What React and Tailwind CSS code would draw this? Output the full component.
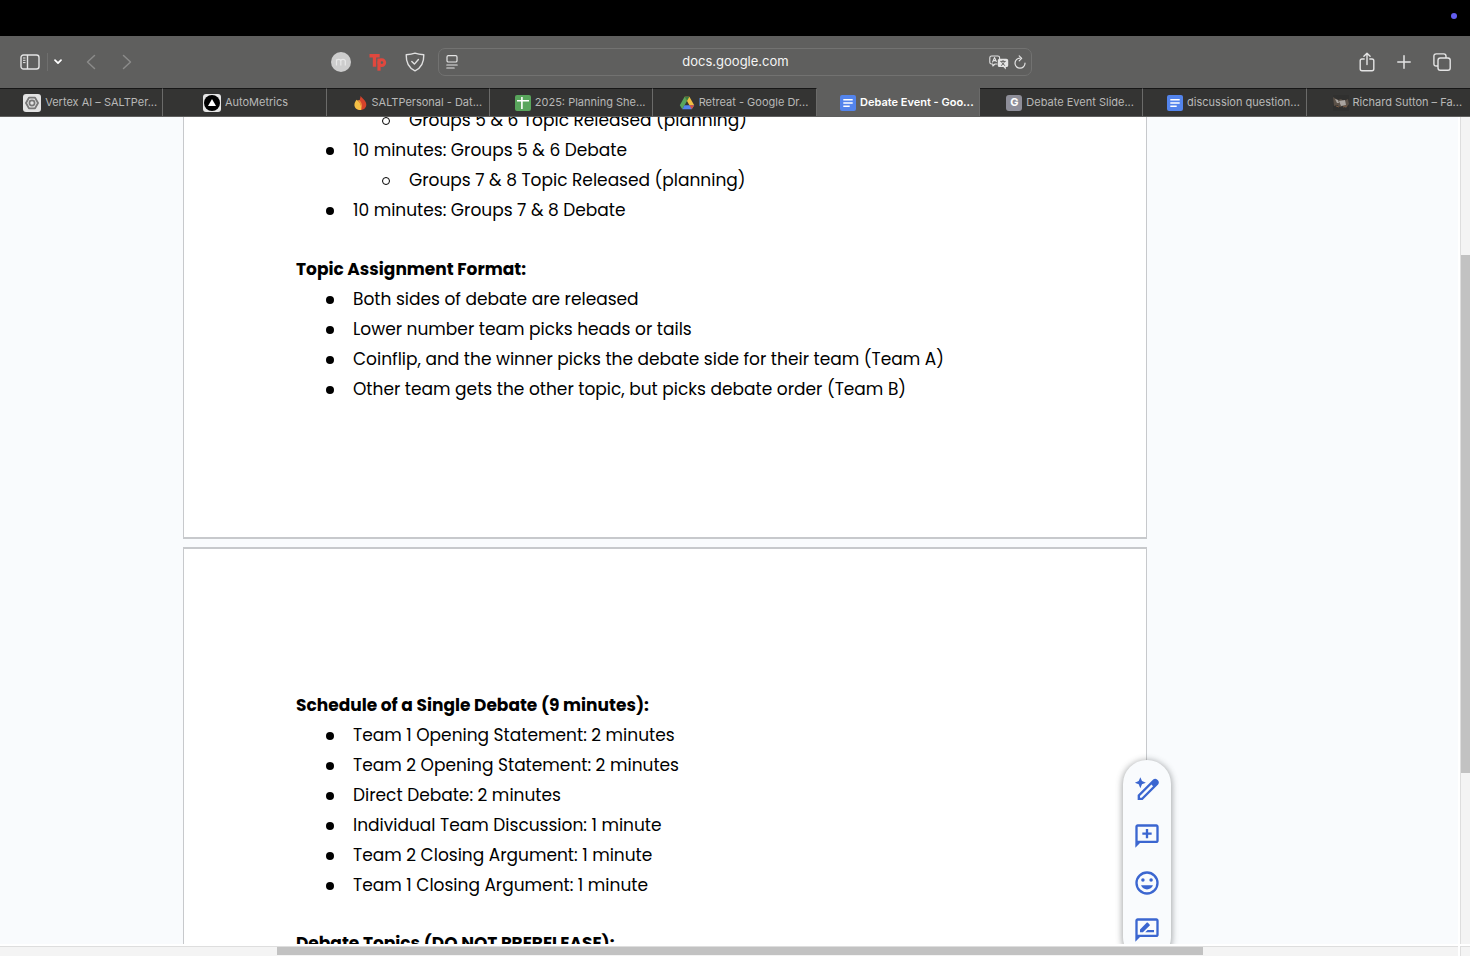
const Chrome = {
  Sidebar: () => (
    <svg viewBox="0 0 20 16" className="h-4 w-5" fill="none" stroke="#e4e4e4" strokeWidth="1.4">
      <rect x="1" y="1" width="18" height="14" rx="2.5" />
      <path d="M7.5 1v14" />
      <path d="M3 4h2.5M3 6.3h2.5M3 8.6h2.5" strokeWidth="1" />
    </svg>
  ),
  Chevron: () => (
    <svg viewBox="0 0 8 6" className="h-[6px] w-2" fill="none" stroke="#fff" strokeWidth="1.7" strokeLinecap="round" strokeLinejoin="round">
      <path d="M1 1.2l3 3 3-3" />
    </svg>
  ),
  Back: () => (
    <svg viewBox="0 0 10 16" className="h-4 w-[10px]" fill="none" stroke="#8b8b8a" strokeWidth="1.5" strokeLinecap="round" strokeLinejoin="round">
      <path d="M8.5 1.5L1.5 8l7 6.5" />
    </svg>
  ),
  Forward: () => (
    <svg viewBox="0 0 10 16" className="h-4 w-[10px]" fill="none" stroke="#8b8b8a" strokeWidth="1.5" strokeLinecap="round" strokeLinejoin="round">
      <path d="M1.5 1.5l7 6.5-7 6.5" />
    </svg>
  ),
  Momentum: () => (
    <svg viewBox="0 0 20 20" className="size-5">
      <circle cx="10" cy="10" r="10" fill="#cdcdcd" />
      <path d="M5.500 13.500V7.200M5.500 9.200c0-1.200.8-1.900 2.100-1.900s2.200.7 2.200 2v4.200M9.800 9.300c0-1.300.9-2 2.200-2s2.300.7 2.300 2v4.200" fill="none" stroke="#e8e8e8" strokeWidth="1.2" />
    </svg>
  ),
  Tp: () => (
    <svg viewBox="0 0 18 18" className="size-[18px]" fill="none" stroke="#e0483e" strokeWidth="3.4">
      <path d="M0.500 2.700h10.200M5.500 1.500v12.200" />
      <path d="M10 5.500v12.200" strokeWidth="3.2" />
      <circle cx="12.8" cy="9.6" r="2.9" strokeWidth="2.9" />
    </svg>
  ),
  Shield: () => (
    <svg viewBox="0 0 20 20" className="size-5" fill="none" stroke="#e0e0e0" strokeWidth="1.4" strokeLinejoin="round" strokeLinecap="round">
      <path d="M10 1.200C7.300 2.200 4.200 2.600 1.200 2.800 1 10.500 3.600 16 10 18.800c6.400-2.800 9-8.300 8.800-16C15.800 2.600 12.700 2.200 10 1.200z" />
      <path d="M6.800 9.500l2.600 2.600 4-4.600" />
    </svg>
  ),
  Reader: () => (
    <svg viewBox="0 0 12 14" className="h-[14px] w-3" fill="none" stroke="#e4e4e4" strokeWidth="1.2" strokeLinecap="round">
      <rect x="1" y="0.7" width="10" height="6.3" rx="1.3" />
      <path d="M0.800 10h10.400M0.800 13h7.400" />
    </svg>
  ),
  Translate: () => (
    <svg viewBox="0 0 20 15" className="h-[15px] w-5" fill="none" stroke="#e4e4e4" strokeWidth="1.1" strokeLinejoin="round" strokeLinecap="round">
      <path d="M8 9H6l-2.200 2V9H2.600C1.500 9 .8 8.300.8 7.200V2.800C.8 1.700 1.500 1 2.600 1h6.200c1.100 0 1.800.7 1.800 1.800v.6" />
      <path d="M3.600 7l1.900-4.400L7.300 6.500M4.200 5.600h2.500" />
      <path d="M10.800 3.800h6.400c1.200 0 2 .7 2 1.900v4.500c0 1.200-.8 1.900-2 1.900h-.4v2.500l-2.400-2.500h-3.600c-1.200 0-2-.7-2-1.900V5.700c0-1.200.8-1.900 2-1.900z" fill="#e4e4e4" stroke="none" />
      <path d="M11.600 6.400h4.800M14 5.400v1M12.300 10.400c1.600-.8 2.700-2 3.100-3.900M12.600 6.900c.5 1.500 1.600 2.700 3.200 3.500" stroke="#5f5f5e" strokeWidth="0.9" />
    </svg>
  ),
  Reload: () => (
    <svg viewBox="0 0 12 14" className="h-[14px] w-3" fill="none" stroke="#e4e4e4" strokeWidth="1.2" strokeLinecap="round" strokeLinejoin="round">
      <path d="M6 3.200A5 5 0 1 0 11 8.200" />
      <path d="M5.200.8l2.500 2.500-2.500 2.500" />
    </svg>
  ),
  Share: () => (
    <svg viewBox="0 0 16 20" className="h-5 w-4" fill="none" stroke="#e4e4e4" strokeWidth="1.4" strokeLinecap="round" strokeLinejoin="round">
      <path d="M5.200 7H3C1.800 7 1.200 7.700 1.200 8.800v8c0 1.200.6 1.900 1.800 1.900h10c1.200 0 1.800-.7 1.800-1.900v-8C14.800 7.700 14.200 7 13 7h-2.200" />
      <path d="M8 12.500V1.500M4.900 4.300L8 1.200l3.100 3.100" />
    </svg>
  ),
  Plus: () => (
    <svg viewBox="0 0 14 14" className="size-[14px]" fill="none" stroke="#e4e4e4" strokeWidth="1.5" strokeLinecap="round">
      <path d="M7 .8v12.400M.8 7h12.400" />
    </svg>
  ),
  Tabs: () => (
    <svg viewBox="0 0 18 18" className="size-[18px]" fill="none" stroke="#e4e4e4" strokeWidth="1.4" strokeLinejoin="round">
      <rect x="5" y="5" width="12.2" height="12.2" rx="2.3" />
      <path d="M5 13H3.200C1.700 13 .9 12.200.9 10.800V3.200C.9 1.700 1.700.9 3.200.9h7.600c1.500 0 2.200.8 2.200 2.300V5" />
    </svg>
  ),
};

const DocsIcon = () => (
  <svg viewBox="0 0 16 16" className="size-4 shrink-0">
    <rect width="16" height="16" rx="2" fill="#5384ec" />
    <path d="M3.300 4.800h9.400M3.300 8h9.400M3.300 11.200h6.400" stroke="#fff" strokeWidth="1.4" />
  </svg>
);

const favicons = {
  vertex: (
    <svg viewBox="0 0 18 18" className="size-[18px] shrink-0">
      <rect width="18" height="18" rx="3" fill="#e3e3e3" />
      <path d="M6 3.600h6L15 9l-3 5.400H6L3 9z" fill="none" stroke="#777" strokeWidth="1.9" strokeLinejoin="round" />
      <circle cx="9" cy="9" r="2.6" fill="none" stroke="#777" strokeWidth="1.7" />
    </svg>
  ),
  auto: (
    <svg viewBox="0 0 18 18" className="size-[18px] shrink-0">
      <rect width="18" height="18" rx="3" fill="#e6e6e6" />
      <circle cx="9" cy="9" r="8" fill="#000" />
      <path d="M9 5l4 7H5z" fill="#fff" />
    </svg>
  ),
  fire: (
    <svg viewBox="0 0 16 16" className="size-4 shrink-0">
      <path d="M8.600.8c1 2.400 5.700 4.400 5.700 8.800 0 3.200-2.300 5.400-5.700 5.400-2.500 0-4.300-1.400-5-3.600C5 9 8.400 6 8.600.8z" fill="#d5432b" />
      <path d="M4.600 4.800c2.700 1.500 5.200 4.700 4.600 10.200C5.400 15.200 2.400 13 2.400 9.900c0-2.200 1.300-3.700 2.200-5.100z" fill="#f4be45" />
      <path d="M5.600 5.400c2.700 2.300 4.300 5.600 3.600 9.600 1.500-2.800 1.200-6.700-1.800-9.900z" fill="#ed8a3a" />
    </svg>
  ),
  sheets: (
    <svg viewBox="0 0 16 16" className="size-4 shrink-0">
      <rect width="16" height="16" rx="2" fill="#58a55c" />
      <path d="M2 5.800h12M6.900 2v12" stroke="#fff" strokeWidth="1.6" />
    </svg>
  ),
  drive: (
    <svg viewBox="0 0 16 16" className="size-4 shrink-0">
      <path d="M5.600 1.800L.8 10.200l2.500 4.100L8 6z" fill="#58a55c" />
      <path d="M5.600 1.800h4.800l4.800 8.400h-4.800z" fill="#f1bf42" />
      <path d="M5.600 1.800h4.800L8 6z" fill="#3a7d44" />
      <path d="M5.500 10.200h9.700l-2.500 4.100H3.300z" fill="#5384ec" />
      <path d="M10.400 10.200h4.800l-2.500 4.100z" fill="#d9503f" />
    </svg>
  ),
  docs: <DocsIcon />,
  g: (
    <span className="flex size-4 shrink-0 items-center justify-center rounded-[3px] bg-[#8e8e99] text-[11px] font-bold text-white">G</span>
  ),
  photo: (
    <svg viewBox="0 0 16 16" className="size-4 shrink-0">
      <rect width="16" height="16" fill="#30302f" />
      <path d="M0 2l5 3 3-1 3 2 4-2 1 5-3 4-3-2-3 1-3-2-3 1z" fill="#5b5148" />
      <path d="M2 4l3 1 1 3-2 0zM6 6l6-1 1 5-5 1z" fill="#a9a49f" />
      <path d="M3 11l3 1M10 12l4-1" stroke="#7a5a43" />
    </svg>
  ),
};

const tabs = [
  { icon: "vertex", title: "Vertex AI – SALTPer..." },
  { icon: "auto", title: "AutoMetrics", short: true },
  { icon: "fire", title: "SALTPersonal - Dat..." },
  { icon: "sheets", title: "2025: Planning She..." },
  { icon: "drive", title: "Retreat - Google Dr..." },
  { icon: "docs", title: "Debate Event - Goo...", active: true },
  { icon: "g", title: "Debate Event Slide..." },
  { icon: "docs", title: "discussion question..." },
  { icon: "photo", title: "Richard Sutton – Fa..." },
];

const IconButton = ({ label, className = "", children }) => (
  <button type="button" aria-label={label} className={`flex shrink-0 items-center justify-center ${className}`}>
    {children}
  </button>
);

const Toolbar = () => (
  <div className="grid h-[52px] shrink-0 grid-cols-[1fr_594px_1fr] items-center bg-[#5f5f5e]">
    <div className="flex items-center pr-[13px] pl-5">
      <IconButton label="Show sidebar"><Chrome.Sidebar /></IconButton>
      <span className="ml-[7px] h-[18px] w-px bg-[#6f6f6e]" />
      <IconButton label="Tab groups" className="ml-[6px]"><Chrome.Chevron /></IconButton>
      <IconButton label="Back" className="ml-6"><Chrome.Back /></IconButton>
      <IconButton label="Forward" className="ml-[26px]"><Chrome.Forward /></IconButton>
      <div className="ml-auto flex items-center gap-[18px]">
        <IconButton label="Momentum"><Chrome.Momentum /></IconButton>
        <IconButton label="Toolbar extension"><Chrome.Tp /></IconButton>
        <IconButton label="Privacy report"><Chrome.Shield /></IconButton>
      </div>
    </div>
    <div className="flex h-7 items-center rounded-[7px] border border-[#727271] px-[5px]">
      <IconButton label="Page settings" className="w-4"><Chrome.Reader /></IconButton>
      <input
        aria-label="Address"
        defaultValue="docs.google.com"
        className="min-w-0 flex-1 bg-transparent pl-[22px] text-center text-[13px] text-[#f4f4f4] outline-none"
      />
      <div className="flex items-center gap-[5px]">
        <IconButton label="Translate"><Chrome.Translate /></IconButton>
        <IconButton label="Reload"><Chrome.Reload /></IconButton>
      </div>
    </div>
    <div className="flex items-center justify-end gap-[22px] pr-[19px]">
      <IconButton label="Share"><Chrome.Share /></IconButton>
      <IconButton label="New tab"><Chrome.Plus /></IconButton>
      <IconButton label="Tab overview"><Chrome.Tabs /></IconButton>
    </div>
  </div>
);

const TabBar = () => (
  <div role="tablist" className="grid h-[29px] shrink-0 grid-cols-9 border-b border-[#5f5f5e] bg-[#343433]">
    {tabs.map((tab) => (
      <button
        key={tab.title}
        type="button"
        role="tab"
        aria-selected={Boolean(tab.active)}
        className={`flex min-w-0 items-center justify-center gap-1 border-t border-r border-r-[#6b6b6a] pl-6 text-[11px] whitespace-nowrap last:border-r-0 ${
          tab.short ? "pr-[22px]" : "pr-[6px]"
        } ${tab.active ? "border-t-[#5f5f5e] bg-[#5f5f5e] font-semibold text-white" : "border-t-[#171717] text-[#b8b8b7]"}`}
      >
        {favicons[tab.icon]}
        <span>{tab.title}</span>
      </button>
    ))}
  </div>
);

const Item = ({ children, nested }) => (
  <li className={`flex items-center leading-[30px] ${nested ? "pl-[86px]" : "pl-[30px]"}`}>
    <span className={`mt-[2px] mr-[19px] size-2 shrink-0 rounded-full ${nested ? "border border-black" : "bg-black"}`} />
    {children}
  </li>
);

const Heading = ({ children }) => <h2 className="text-[17px] leading-[30px] font-bold">{children}</h2>;

const tools = [
  {
    label: "Help me write",
    path: "M6.300 1.900l1.400 3.300 3.300 1.400-3.300 1.400-1.400 3.300-1.400-3.300-3.300-1.400 3.300-1.400zM4 17.200L17.300 3.900c.9-.9 2.400-.9 3.300 0l.9.9c.9.9.9 2.400 0 3.300L8.200 21.400H4zM6 18v1.400h1.400l9.800-9.800-1.400-1.400z",
  },
  {
    label: "Add comment",
    path: "M20 2H4c-1.100 0-2 .9-2 2v18l4-4h14c1.100 0 2-.9 2-2V4c0-1.100-.9-2-2-2zm0 14H4V4h16v12zM11 14h2v-3h3V9h-3V6h-2v3H8v2h3z",
  },
  {
    label: "Add emoji reaction",
    path: "M12 2a10 10 0 1 0 0 20 10 10 0 0 0 0-20zm0 18a8 8 0 1 1 0-16 8 8 0 0 1 0 16zM15.500 11a1.500 1.500 0 1 0 0-3 1.500 1.500 0 0 0 0 3zM8.500 11a1.500 1.500 0 1 0 0-3 1.500 1.500 0 0 0 0 3zM12 17.500c2.330 0 4.310-1.460 5.110-3.500H6.890c.8 2.040 2.780 3.500 5.110 3.500z",
  },
  {
    label: "Suggest edits",
    path: "M20 2H4c-1.100 0-2 .9-2 2v18l4-4h14c1.100 0 2-.9 2-2V4c0-1.100-.9-2-2-2zm0 14H4V4h16v12zM10.500 14H18v-2h-5.500zM14.360 8.130c.2-.2.2-.51 0-.71l-1.770-1.770c-.2-.2-.51-.2-.71 0L6 11.530V14h2.470z",
  },
];

const SideTools = () => (
  <div className="absolute top-[211px] -right-[25px] flex w-12 flex-col items-center rounded-3xl bg-[#f9fbfd] pt-[5px] pb-2 shadow-[0_1px_6px_1px_rgba(60,64,67,0.45)]">
    {tools.map((tool) => (
      <IconButton key={tool.label} label={tool.label} className="h-[47px] w-12">
        <svg viewBox="0 0 24 24" className="size-7" fill="#3b66d0" fillRule="evenodd">
          <path d={tool.path} />
        </svg>
      </IconButton>
    ))}
  </div>
);

export default function App() {
  return (
    <div className="flex h-screen flex-col overflow-hidden bg-white font-['Inter',sans-serif]">
      <div className="flex h-9 shrink-0 items-center justify-end bg-black pr-[13px]">
        <span className="mb-1 size-[6px] rounded-full bg-[#625df0]" />
      </div>
      <Toolbar />
      <TabBar />
      <div className="flex min-h-0 flex-1">
        <main className="min-w-0 flex-1 overflow-hidden bg-[#f9fbfd] pl-[183px] font-['Poppins','Inter',sans-serif] text-[17px] text-black">
          <article className="-mt-3 w-[964px] border border-t-0 border-b-2 border-[#c7c9cc] bg-white px-28 pb-[133px]">
            <ul>
              <Item nested>Groups 5 &amp; 6 Topic Released (planning)</Item>
              <Item>10 minutes: Groups 5 &amp; 6 Debate</Item>
              <Item nested>Groups 7 &amp; 8 Topic Released (planning)</Item>
              <Item>10 minutes: Groups 7 &amp; 8 Debate</Item>
            </ul>
            <div className="pt-[29px]">
              <Heading>Topic Assignment Format:</Heading>
            </div>
            <ul>
              <Item>Both sides of debate are released</Item>
              <Item>Lower number team picks heads or tails</Item>
              <Item>Coinflip, and the winner picks the debate side for their team (Team A)</Item>
              <Item>Other team gets the other topic, but picks debate order (Team B)</Item>
            </ul>
          </article>
          <article className="relative mt-2 w-[964px] border border-t-2 border-b-0 border-[#c7c9cc] bg-white px-28 pt-[141px] pb-28">
            <Heading>Schedule of a Single Debate (9 minutes):</Heading>
            <ul>
              <Item>Team 1 Opening Statement: 2 minutes</Item>
              <Item>Team 2 Opening Statement: 2 minutes</Item>
              <Item>Direct Debate: 2 minutes</Item>
              <Item>Individual Team Discussion: 1 minute</Item>
              <Item>Team 2 Closing Argument: 1 minute</Item>
              <Item>Team 1 Closing Argument: 1 minute</Item>
            </ul>
            <div className="pt-7">
              <Heading>Debate Topics (DO NOT PRERELEASE):</Heading>
            </div>
            <SideTools />
          </article>
        </main>
        <div className="ml-[2px] w-[10px] border-l border-[#dedede] bg-[#f4f4f4] pt-[138px]">
          <div className="h-[518px] bg-[#c2c2c2]" />
        </div>
      </div>
      <div className="flex h-3 shrink-0 pt-[2px]">
        <div className="flex-1 border-t border-[#dedede] bg-[#f4f4f4] pl-[277px]">
          <div className="h-2 w-[926px] bg-[#c2c2c2]" />
        </div>
        <div className="ml-[2px] w-[10px] border-t border-l border-[#dedede] bg-[#f4f4f4]" />
      </div>
    </div>
  );
}
